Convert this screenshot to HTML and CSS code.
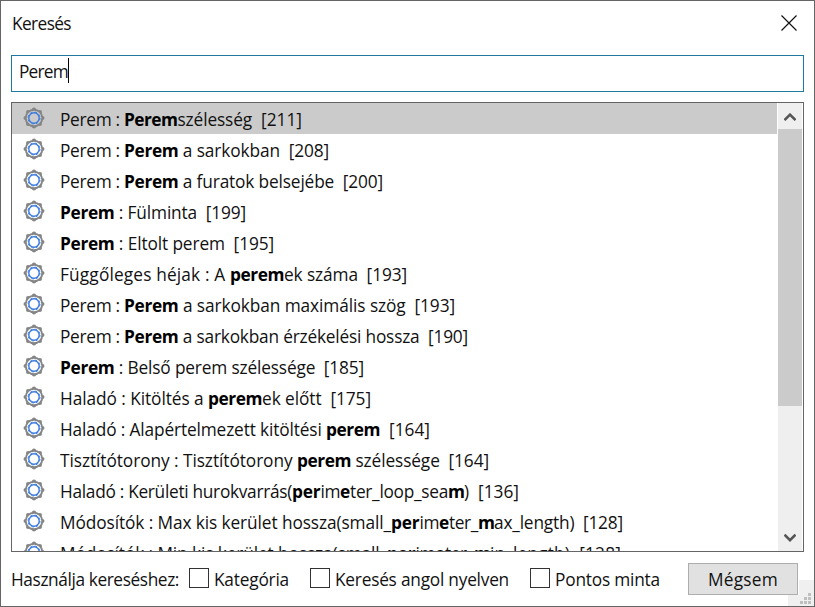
FILE: index.html
```
<!DOCTYPE html>
<html lang="hu">
<head>
<meta charset="utf-8">
<title>Keresés</title>
<link rel="stylesheet" href="styles.css">
</head>
<body>
<svg class="defs" aria-hidden="true">
  <symbol id="gear" viewBox="0 0 22 22">
    <g fill="#858585">
      <circle cx="11" cy="2.6" r="2.1"/><circle cx="16.9" cy="5.1" r="2.1"/>
      <circle cx="19.4" cy="11" r="2.1"/><circle cx="16.9" cy="16.9" r="2.1"/>
      <circle cx="11" cy="19.4" r="2.1"/><circle cx="5.1" cy="16.9" r="2.1"/>
      <circle cx="2.6" cy="11" r="2.1"/><circle cx="5.1" cy="5.1" r="2.1"/>
    </g>
    <circle class="face" cx="11" cy="11" r="8.3" stroke="#858585" stroke-width="1.9"/>
    <circle cx="11" cy="11" r="5.2" fill="none" stroke="#3a7be0" stroke-width="1.4"/>
    <circle cx="11" cy="11" r="6" fill="none" stroke="#3a7be0" stroke-width="1" stroke-dasharray="2.4 2.312"/>
  </symbol>
</svg>
<div class="dialog">
  <header class="titlebar">
    <span class="fit" data-w="59">Keresés</span>
    <svg class="close" viewBox="0 0 16 16"><path d="M.5 .5L15.5 15.5M15.5 .5L.5 15.5"/></svg>
  </header>
  <div class="search"><span class="fit" data-w="49">Perem</span><i class="caret"></i></div>
  <div class="list">
    <div class="rows" id="rows"></div>
    <div class="scrollbar">
      <svg class="arrow" viewBox="0 0 12 10"><path d="M0.5 7.2L6 1.7l5.5 5.5"/></svg>
      <div class="thumb"></div>
      <svg class="arrow down" viewBox="0 0 12 10"><path d="M0.5 1.7L6 7.2l5.5-5.5"/></svg>
    </div>
  </div>
  <footer class="footer">
    <span class="fit label" data-w="168">Használja kereséshez:</span>
    <label class="option first"><i class="box"></i><span class="fit" data-w="75">Kategória</span></label>
    <label class="option second"><i class="box"></i><span class="fit" data-w="174">Keresés angol nyelven</span></label>
    <label class="option third"><i class="box"></i><span class="fit" data-w="105">Pontos minta</span></label>
    <button class="cancel"><span class="fit" data-w="70">Mégsem</span></button>
  </footer>
  <svg class="grip" viewBox="0 0 26 26"><path fill="#f0f0f0" d="M11 0H26V26H0V15H11Z"/><path fill="#bfbfbf" d="M20 13h3v3h-3zM16 17h3v3h-3zM20 17h3v3h-3zM12 21h3v3h-3zM16 21h3v3h-3zM20 21h3v3h-3z"/></svg>
</div>
<script src="rows.js"></script>
</body>
</html>
```
FILE: styles.css
```
* { box-sizing: border-box; }
body {
  margin: 0;
  font-family: "Open Sans", "Noto Sans", sans-serif;
  font-size: 17.3px;
  line-height: 24px;
  color: #111;
  background: #fff;
}
.defs { position: absolute; width: 0; height: 0; }
.dialog {
  position: relative;
  width: 815px;
  height: 607px;
  padding: 0 10px;
  border: 1px solid #656565;
  overflow: hidden;
  display: flex;
  flex-direction: column;
}
.fit { white-space: pre; }
.titlebar {
  height: 54px;
  padding: 11px 6px 0 1px;
  display: flex;
  justify-content: space-between;
  align-items: flex-start;
}
.close { width: 16px; height: 16px; margin: 3px 1px 0 0; }
.close path { stroke: #111; stroke-width: 1.2; fill: none; }
.search {
  width: 793px;
  height: 37px;
  padding: 4px 7px;
  border: 1px solid #1e7aa0;
  display: flex;
  align-items: flex-start;
}
.caret { width: 1px; height: 25px; margin-top: -2px; background: #000; }
.list {
  width: 793px;
  height: 450px;
  margin-top: 10px;
  border: 1px solid #656565;
  display: flex;
  overflow: hidden;
}
.rows { width: 765px; overflow: hidden; }
.row {
  height: 31px;
  padding: 4px 0 0 11px;
  display: flex;
}
.row.selected { background: #cbcbcb; }
.gear { width: 22px; height: 22px; margin-right: 15px; flex: none; fill: #fff; }
.selected .gear { fill: #cbcbcb; }
.text { white-space: pre; padding-top: 1px; }
.text b { font-weight: 700; color: #000; }
.scrollbar {
  width: 24px;
  margin-left: 1px;
  background: #efefef;
  display: flex;
  flex-direction: column;
  align-items: center;
}
.arrow { width: 12px; height: 10px; margin: 10px 0 6px; flex: none; }
.arrow path { fill: none; stroke: #555; stroke-width: 2.6; }
.arrow.down { margin: auto 0 8px; }
.thumb { width: 24px; height: 277px; background: #cbcbcb; flex: none; }
.footer { height: 54px; display: flex; align-items: flex-start; }
.label { width: 178px; margin-top: 16px; }
.option { display: flex; }
.option.first { width: 121px; }
.option.second { width: 220px; }
.option.third { width: 158px; }
.option .fit { margin-top: 16px; }
.box { width: 20px; height: 20px; margin: 16px 5px 0 0; border: 1px solid #333; background: #fff; flex: none; }
.cancel {
  width: 110px;
  height: 32px;
  margin-top: 11px;
  padding: 2px 0 0;
  border: 1px solid #adadad;
  background: #e1e1e1;
  font: inherit;
  color: inherit;
  line-height: 24px;
}
.grip { position: absolute; right: 0; bottom: 0; width: 26px; height: 26px; z-index: -1; }
```
FILE: rows.js
```
// Each run is [text, width in px, bold].
const rows = [
  [["Perem : ", 64], ["Perem", 53.5, 1], ["szélesség", 74.5], ["  [211]", 50]],
  [["Perem : ", 64], ["Perem", 54.5, 1], [" a sarkokban  [208]", 150.5]],
  [["Perem : ", 64], ["Perem", 54.5, 1], [" a furatok belsejébe  [200]", 204.5]],
  [["Perem", 54.5, 1], [" : Fülminta  [199]", 131.5]],
  [["Perem", 54.5, 1], [" : Eltolt perem  [195]", 159.5]],
  [["Függőleges héjak : A ", 170], ["perem", 54, 1], ["ek száma  [193]", 123]],
  [["Perem : ", 64], ["Perem", 54.5, 1], [" a sarkokban maximális szög  [193]", 276.5]],
  [["Perem : ", 64], ["Perem", 54.5, 1], [" a sarkokban érzékelési hossza  [190]", 289.5]],
  [["Perem", 54.5, 1], [" : Belső perem szélessége  [185]", 249.5]],
  [["Haladó : Kitöltés a ", 148], ["perem", 54, 1], ["ek előtt  [175]", 109]],
  [["Haladó : Alapértelmezett kitöltési ", 266], ["perem", 54, 1], ["  [164]", 50]],
  [["Tisztítótorony : Tisztítótorony ", 237], ["perem", 54, 1], [" szélessége  [164]", 138]],
  [["Haladó : Kerületi hurokvarrás(", 232], ["per", 28.5, 1], ["im", 19.5], ["e", 10, 1], ["ter_loop_sea", 98], ["m", 16, 1], [")  [136]", 55]],
  [["Módosítók : Max kis kerület hossza(small_", 331], ["per", 28.5, 1], ["im", 19.5], ["e", 10, 1], ["ter_", 29], ["m", 16, 1], ["ax_length)  [128]", 129]],
  [["Módosítók : Min kis kerület hossza(small_", 327], ["per", 28.5, 1], ["im", 19.5], ["e", 10, 1], ["ter_", 29], ["m", 16, 1], ["in_length)  [128]", 131]]
];
const list = document.getElementById("rows");
rows.forEach((runs, i) => {
  const html = runs.map(([t, w, b]) => {
    const tag = b ? "b" : "span";
    return `<${tag} class="fit" data-w="${w}">${t}</${tag}>`;
  }).join("");
  list.insertAdjacentHTML("beforeend",
    `<div class="row${i ? "" : " selected"}"><svg class="gear"><use href="#gear"/></svg><div class="text">${html}</div></div>`);
});
// Spread each run's letters over its column width.
function fit() {
  document.querySelectorAll(".fit").forEach(el => {
    el.style.letterSpacing = "0px";
    const range = document.createRange();
    range.selectNodeContents(el);
    const gap = (el.dataset.w - range.getBoundingClientRect().width) / el.textContent.length;
    el.style.letterSpacing = gap + "px";
  });
}
fit();
document.fonts.ready.then(fit);
```
